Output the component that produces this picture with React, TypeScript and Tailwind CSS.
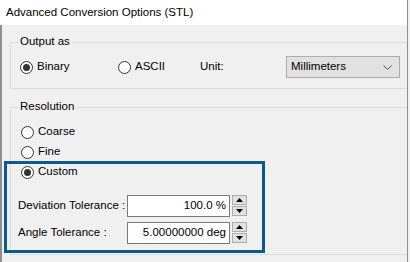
import React from "react";

function Radio({ checked, label }: { checked?: boolean; label: string }) {
  return (
    <div className="flex items-center gap-[4px]">
      <div className="w-[13px] h-[13px] rounded-full border border-[#333333] bg-white flex items-center justify-center">
        {checked && <div className="w-[7px] h-[7px] rounded-full bg-[#333333]" />}
      </div>
      <span>{label}</span>
    </div>
  );
}

function SpinButtons() {
  return (
    <div className="flex flex-col gap-[1px] ml-[2px]">
      <div className="w-[15px] h-[10px] bg-[#e1e1e1] border border-[#adadad] flex items-center justify-center">
        <svg width="7" height="4" viewBox="0 0 7 4">
          <polygon points="0,4 7,4 3.5,0" fill="#000" />
        </svg>
      </div>
      <div className="w-[15px] h-[10px] bg-[#e1e1e1] border border-[#adadad] flex items-center justify-center">
        <svg width="7" height="4" viewBox="0 0 7 4">
          <polygon points="0,0 7,0 3.5,4" fill="#000" />
        </svg>
      </div>
    </div>
  );
}

function ToleranceRow({ label, value }: { label: string; value: string }) {
  return (
    <div className="flex items-start">
      <div className="w-[109px] h-[22px] flex items-center whitespace-nowrap">{label}</div>
      <div className="w-[103px] h-[22px] bg-white border border-[#7a7a7a] flex items-center justify-end pr-[3px] whitespace-nowrap">
        {value}
      </div>
      <SpinButtons />
    </div>
  );
}

export default function App() {
  return (
    <div className="relative w-[410px] h-[262px] overflow-hidden bg-[#f0f0f0] text-black text-[11.5px] leading-none font-['Segoe_UI','Liberation_Sans',Arial,sans-serif]">
      <div className="w-[408px] h-[25px] bg-white border-r border-[#8f8f8f] flex items-center pl-[6px] text-[11.5px]">
        Advanced Conversion Options (STL)
      </div>
      <div className="w-[408px] h-[237px] border-l-2 border-r border-[#8f8f8f] pl-[8px] pt-[17px]">
        {/* Output as */}
        <div className="relative h-[47px] border border-r-0 border-[#dcdcdc]">
          <span className="absolute left-[7px] -top-[7px] px-[2px] bg-[#f0f0f0]">Output as</span>
          <div className="flex items-center pl-[9px] pt-[13px]">
            <div className="w-[98px]">
              <Radio checked label="Binary" />
            </div>
            <div className="w-[82px]">
              <Radio label="ASCII" />
            </div>
            <div className="w-[86px]">Unit:</div>
            <div className="w-[114px] h-[22px] bg-[#e1e1e1] border border-[#adadad] flex items-center justify-between pl-[4px] pr-[7px]">
              <span>Millimeters</span>
              <svg width="9" height="5" viewBox="0 0 9 5">
                <polyline points="0.5,0.5 4.5,4.5 8.5,0.5" fill="none" stroke="#555" strokeWidth="1" />
              </svg>
            </div>
          </div>
        </div>
        {/* Resolution */}
        <div className="relative mt-[18px] h-[148px] border border-r-0 border-[#dcdcdc]">
          <span className="absolute left-[7px] -top-[7px] px-[2px] bg-[#f0f0f0]">Resolution</span>
          <div className="flex flex-col pl-[10px] pt-[14px]">
            <div className="h-[20px] flex items-center">
              <Radio label="Coarse" />
            </div>
            <div className="h-[20px] flex items-center">
              <Radio label="Fine" />
            </div>
            <div className="h-[20px] flex items-center">
              <Radio checked label="Custom" />
            </div>
          </div>
          <div className="flex flex-col gap-[5px] pl-[7px] mt-[13px]">
            <ToleranceRow label="Deviation Tolerance :" value="100.0 %" />
            <ToleranceRow label="Angle Tolerance :" value="5.00000000 deg" />
          </div>
        </div>
      </div>
      <div className="absolute left-[4px] top-[161px] w-[261px] h-[92px] border-[3px] border-[#0b5a8b] pointer-events-none" />
    </div>
  );
}
